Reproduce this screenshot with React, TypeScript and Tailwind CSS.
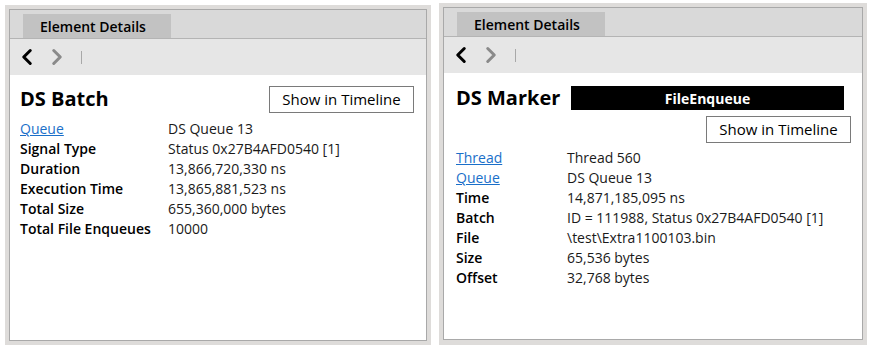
import { ChevronLeft, ChevronRight } from 'lucide-react';

type Row = { label: string; value: string; link?: boolean };

const BATCH_ROWS: Row[] = [
  { label: 'Queue', value: 'DS Queue 13', link: true },
  { label: 'Signal Type', value: 'Status 0x27B4AFD0540 [1]' },
  { label: 'Duration', value: '13,866,720,330 ns' },
  { label: 'Execution Time', value: '13,865,881,523 ns' },
  { label: 'Total Size', value: '655,360,000 bytes' },
  { label: 'Total File Enqueues', value: '10000' },
];

const MARKER_ROWS: Row[] = [
  { label: 'Thread', value: 'Thread 560', link: true },
  { label: 'Queue', value: 'DS Queue 13', link: true },
  { label: 'Time', value: '14,871,185,095 ns' },
  { label: 'Batch', value: 'ID = 111988, Status 0x27B4AFD0540 [1]' },
  { label: 'File', value: '\\test\\Extra1100103.bin' },
  { label: 'Size', value: '65,536 bytes' },
  { label: 'Offset', value: '32,768 bytes' },
];

function PanelHeader() {
  return (
    <>
      <div className="flex h-[29px] items-end border-b border-[#b4b4b4] bg-[#d9d9d9] pl-[13px]">
        <div className="flex h-[24px] w-[148px] items-center bg-[#c2c2c2] pl-[17px] text-[14px] font-semibold text-black">
          Element Details
        </div>
      </div>
      <div className="flex h-[36px] items-center gap-[4px] bg-[#e6e6e6] pl-[4px]">
        <ChevronLeft size={26} strokeWidth={2.8} className="text-black" />
        <ChevronRight size={26} strokeWidth={2.8} className="text-[#8a8a8a]" />
        <span className="ml-[7px] h-[13px] w-px bg-[#a8a8a8]" />
      </div>
    </>
  );
}

function Rows({ rows, valueCol }: { rows: Row[]; valueCol: string }) {
  return (
    <div className="flex flex-col">
      {rows.map((r) => (
        <div key={r.label} className="flex h-[20px] items-center text-[14px] leading-[20px]">
          <span className={`${valueCol} shrink-0 ${r.link ? 'text-[#1a6fc9] underline' : 'font-semibold text-black'}`}>
            {r.label}
          </span>
          <span className="text-[#1a1a1a]">{r.value}</span>
        </div>
      ))}
    </div>
  );
}

function TimelineButton() {
  return (
    <button className="flex h-[27px] w-[145px] items-center justify-center border border-[#7a7a7a] bg-white text-[15px] text-black">
      Show in Timeline
    </button>
  );
}

export default function App() {
  return (
    <div
      className="flex h-[351px] w-[875px] items-start bg-white"
      style={{ fontFamily: '"Open Sans", "Noto Sans", sans-serif' }}
    >
      {/* left panel */}
      <div className="ml-[5px] mt-[5px] h-[340px] w-[426px] border-[4px] border-[#dedcda]">
        <div className="flex h-full flex-col border border-[#a9a9a9] bg-white">
          <PanelHeader />
          <div className="flex flex-col pl-[10px] pr-[12px] pt-[10px]">
            <div className="flex items-center justify-between">
              <h2 className="text-[20px] font-bold leading-[28px] text-black">DS Batch</h2>
              <TimelineButton />
            </div>
            <div className="mt-[6px]">
              <Rows rows={BATCH_ROWS} valueCol="w-[148px]" />
            </div>
          </div>
        </div>
      </div>

      {/* right panel */}
      <div className="ml-[8px] mt-[3px] h-[342px] w-[428px] border-[4px] border-b-[5px] border-[#dedcda]">
        <div className="flex h-full flex-col border border-[#a9a9a9] bg-white">
          <PanelHeader />
          <div className="flex flex-col pl-[12px] pr-[11px] pt-[11px]">
            <div className="flex items-center">
              <h2 className="w-[115px] text-[20px] font-bold leading-[28px] text-black">DS Marker</h2>
              <div className="flex h-[24px] w-[273px] items-center justify-center bg-black text-[14px] font-bold text-white">
                FileEnqueue
              </div>
            </div>
            <div className="mt-[4px] flex justify-end">
              <TimelineButton />
            </div>
            <div className="mt-[5px]">
              <Rows rows={MARKER_ROWS} valueCol="w-[111px]" />
            </div>
          </div>
        </div>
      </div>
    </div>
  );
}
